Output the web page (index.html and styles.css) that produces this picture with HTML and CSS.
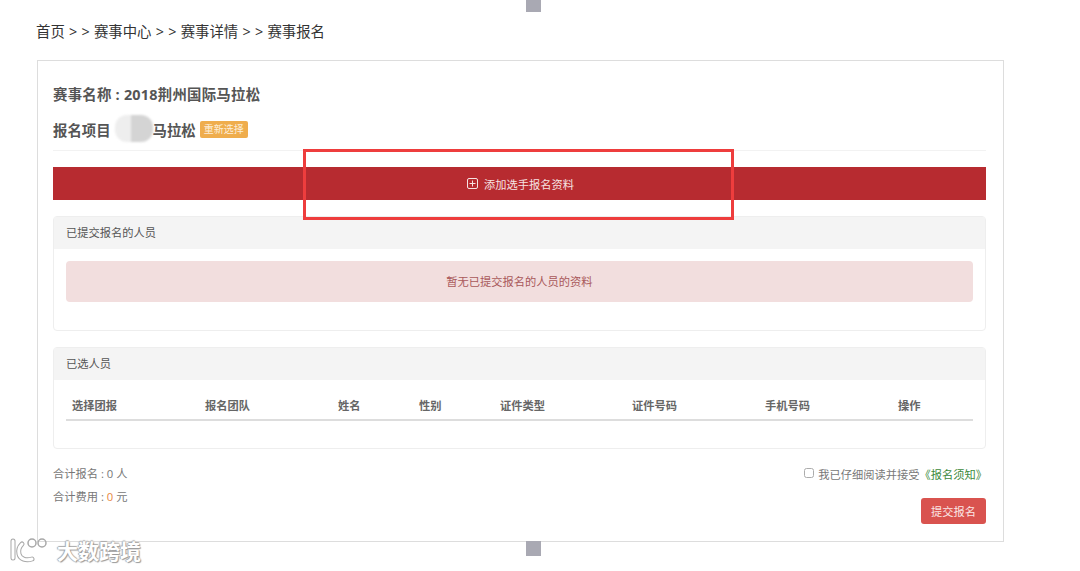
FILE: index.html
```html
<!DOCTYPE html>
<html lang="zh-CN">
<head>
    <meta charset="UTF-8">
    <meta name="viewport" content="width=device-width, initial-scale=1.0">
    <title>赛事报名</title>
    <link rel="stylesheet" href="styles.css">
</head>
<body>
    <div class="mark mark-top"></div>

    <div class="crumbs">首页 &gt; &gt; 赛事中心 &gt; &gt; 赛事详情 &gt; &gt; 赛事报名</div>

    <div class="card">
        <h4 class="race-name">赛事名称 : 2018荆州国际马拉松</h4>
        <div class="race-item">
            <span class="race-item-label">报名项目</span>
            <span class="smudge"></span>
            <span class="race-item-value">马拉松</span>
            <span class="tag">重新选择</span>
        </div>

        <div class="add-bar">
            <svg class="add-icon" width="11" height="11" viewBox="0 0 11 11">
                <rect x="0.5" y="0.5" width="10" height="10" rx="1.5" fill="none" stroke="#f6e3e3"/>
                <path d="M5.5 2.5v6M2.5 5.5h6" fill="none" stroke="#f6e3e3"/>
            </svg>
            <span>添加选手报名资料</span>
        </div>

        <div class="panel panel-submitted">
            <div class="panel-heading">已提交报名的人员</div>
            <div class="panel-body">
                <div class="alert">暂无已提交报名的人员的资料</div>
            </div>
        </div>

        <div class="panel panel-selected">
            <div class="panel-heading">已选人员</div>
            <div class="panel-body">
                <table>
                    <tr>
                        <th class="col-1">选择团报</th>
                        <th class="col-2">报名团队</th>
                        <th class="col-3">姓名</th>
                        <th class="col-4">性别</th>
                        <th class="col-5">证件类型</th>
                        <th class="col-6">证件号码</th>
                        <th class="col-7">手机号码</th>
                        <th>操作</th>
                    </tr>
                </table>
            </div>
        </div>

        <div class="footer">
            <div class="totals">
                <div>合计报名 : 0 人</div>
                <div>合计费用 : <span class="fee">0</span> 元</div>
            </div>
            <div class="submit-side">
                <label class="agree">
                    <input type="checkbox">
                    <span>我已仔细阅读并接受</span><a class="notice">《报名须知》</a>
                </label>
                <button type="button" class="submit">提交报名</button>
            </div>
        </div>
    </div>

    <div class="mark mark-bottom"></div>
    <div class="callout"></div>

    <div class="watermark">
        <svg width="40" height="26" viewBox="0 0 40 26">
            <g fill="none" stroke-linecap="round">
                <g stroke="#a8a8a8" stroke-width="5">
                    <path d="M5 3v17"/>
                    <path d="M14 6c-3 3-4 6-3 10 1 5 7 7 13 5"/>
                </g>
                <g stroke="#fff" stroke-width="3">
                    <path d="M5 3v17"/>
                    <path d="M14 6c-3 3-4 6-3 10 1 5 7 7 13 5"/>
                </g>
                <circle cx="24" cy="5" r="4" stroke="#a8a8a8" stroke-width="1.5"/>
                <circle cx="34" cy="5" r="4" stroke="#a8a8a8" stroke-width="1.5"/>
            </g>
        </svg>
        <span>大数跨境</span>
    </div>
</body>
</html>
```

FILE: styles.css
```css
* {
    box-sizing: border-box;
}
body {
    margin: 0;
    height: 571px;
    padding: 22px 76px 0 36px;
    position: relative;
    overflow: hidden;
    background-color: #FFFFFF;
    font-family: "Open Sans", "Noto Sans CJK SC", sans-serif;
    font-size: 11.25px;
    color: #777;
}
.crumbs {
    height: 20px;
    line-height: 20px;
    font-size: 14.4px;
    word-spacing: 0.5px;
    color: #333;
}
.card {
    width: 967px;
    height: 482px;
    margin: 18px 0 0 1px;
    padding: 24px 17px 0 15px;
    border: 1px solid #ddd;
}
.race-name {
    margin: 0;
    height: 20px;
    line-height: 20px;
    font-size: 14.4px;
    font-weight: bold;
    letter-spacing: 0.25px;
    color: #555;
}
.race-item {
    display: flex;
    align-items: center;
    height: 46px;
    margin-bottom: 16px;
    padding-top: 10px;
    padding-bottom: 7px;
    border-bottom: 1px solid #f2f2f2;
    font-size: 14.4px;
    font-weight: bold;
    color: #555;
}
.smudge {
    width: 38px;
    height: 27px;
    margin: 0 0 2px 4px;
    border-radius: 12px;
    background: linear-gradient(to right, #eee 0 42%, #d4d4d4 42% 100%);
    filter: blur(1px);
}
.tag {
    width: 48px;
    height: 17px;
    margin-left: 4px;
    line-height: 17px;
    text-align: center;
    border-radius: 2px;
    background-color: #efad4d;
    color: #fdeed8;
    font-size: 10px;
    font-weight: normal;
}
.add-bar {
    display: flex;
    align-items: center;
    justify-content: center;
    gap: 6px;
    height: 33px;
    margin-bottom: 16px;
    padding-left: 2px;
    background-color: #b72b30;
    color: #f6e3e3;
}
.panel {
    border: 1px solid #eee;
    border-radius: 4px;
    margin-bottom: 16px;
}
.panel-submitted {
    height: 115px;
}
.panel-selected {
    height: 102px;
    margin-bottom: 0;
}
.panel-heading {
    height: 32px;
    line-height: 32px;
    padding: 0 12px;
    background-color: #f4f4f4;
    color: #555;
}
.panel-body {
    padding: 12px;
}
.panel-selected .panel-body {
    padding-top: 11px;
}
.alert {
    height: 41px;
    line-height: 41px;
    text-align: center;
    border-radius: 4px;
    background-color: #f2dede;
    color: #a9585a;
}
table {
    width: 100%;
    border-collapse: collapse;
    table-layout: fixed;
}
th {
    height: 29px;
    padding: 0 6px;
    text-align: left;
    border-bottom: 2px solid #ddd;
    color: #666;
}
.col-1, .col-2, .col-6, .col-7 {
    width: 133px;
}
.col-3, .col-4 {
    width: 81px;
}
.col-5 {
    width: 132px;
}
.footer {
    display: flex;
    justify-content: space-between;
    margin-top: 14px;
}
.totals div {
    height: 23px;
    line-height: 22px;
}
.fee {
    color: #e8873f;
}
.submit-side {
    display: flex;
    flex-direction: column;
    align-items: flex-end;
}
.agree {
    display: flex;
    align-items: center;
    height: 22px;
}
.agree input {
    width: 10px;
    height: 10px;
    margin: 0 4px 3px 0;
    opacity: 0.6;
}
.notice {
    color: #3c8a3c;
    margin-right: -1px;
}
.submit {
    width: 65px;
    height: 26px;
    margin-top: 13px;
    padding: 0;
    border: none;
    border-radius: 3px;
    background-color: #d9534f;
    color: #fbe6e5;
    font-family: inherit;
    font-size: 11.25px;
}
.mark {
    position: absolute;
    left: 526px;
    width: 15px;
    background-color: #a9a9b3;
}
.mark-top {
    top: 0;
    height: 12px;
}
.mark-bottom {
    top: 541px;
    height: 15px;
}
.callout {
    position: absolute;
    left: 303px;
    top: 149px;
    width: 431px;
    height: 71px;
    border: 3px solid #ee3d3d;
}
.watermark {
    position: absolute;
    left: 8px;
    top: 537px;
    display: flex;
    align-items: center;
    gap: 9px;
    font-size: 21px;
    line-height: 28px;
    font-weight: bold;
    color: #fff;
    text-shadow: 1px 1px 1px #999, -1px 0 1px #aaa, 0 -1px 1px #aaa;
}
```
